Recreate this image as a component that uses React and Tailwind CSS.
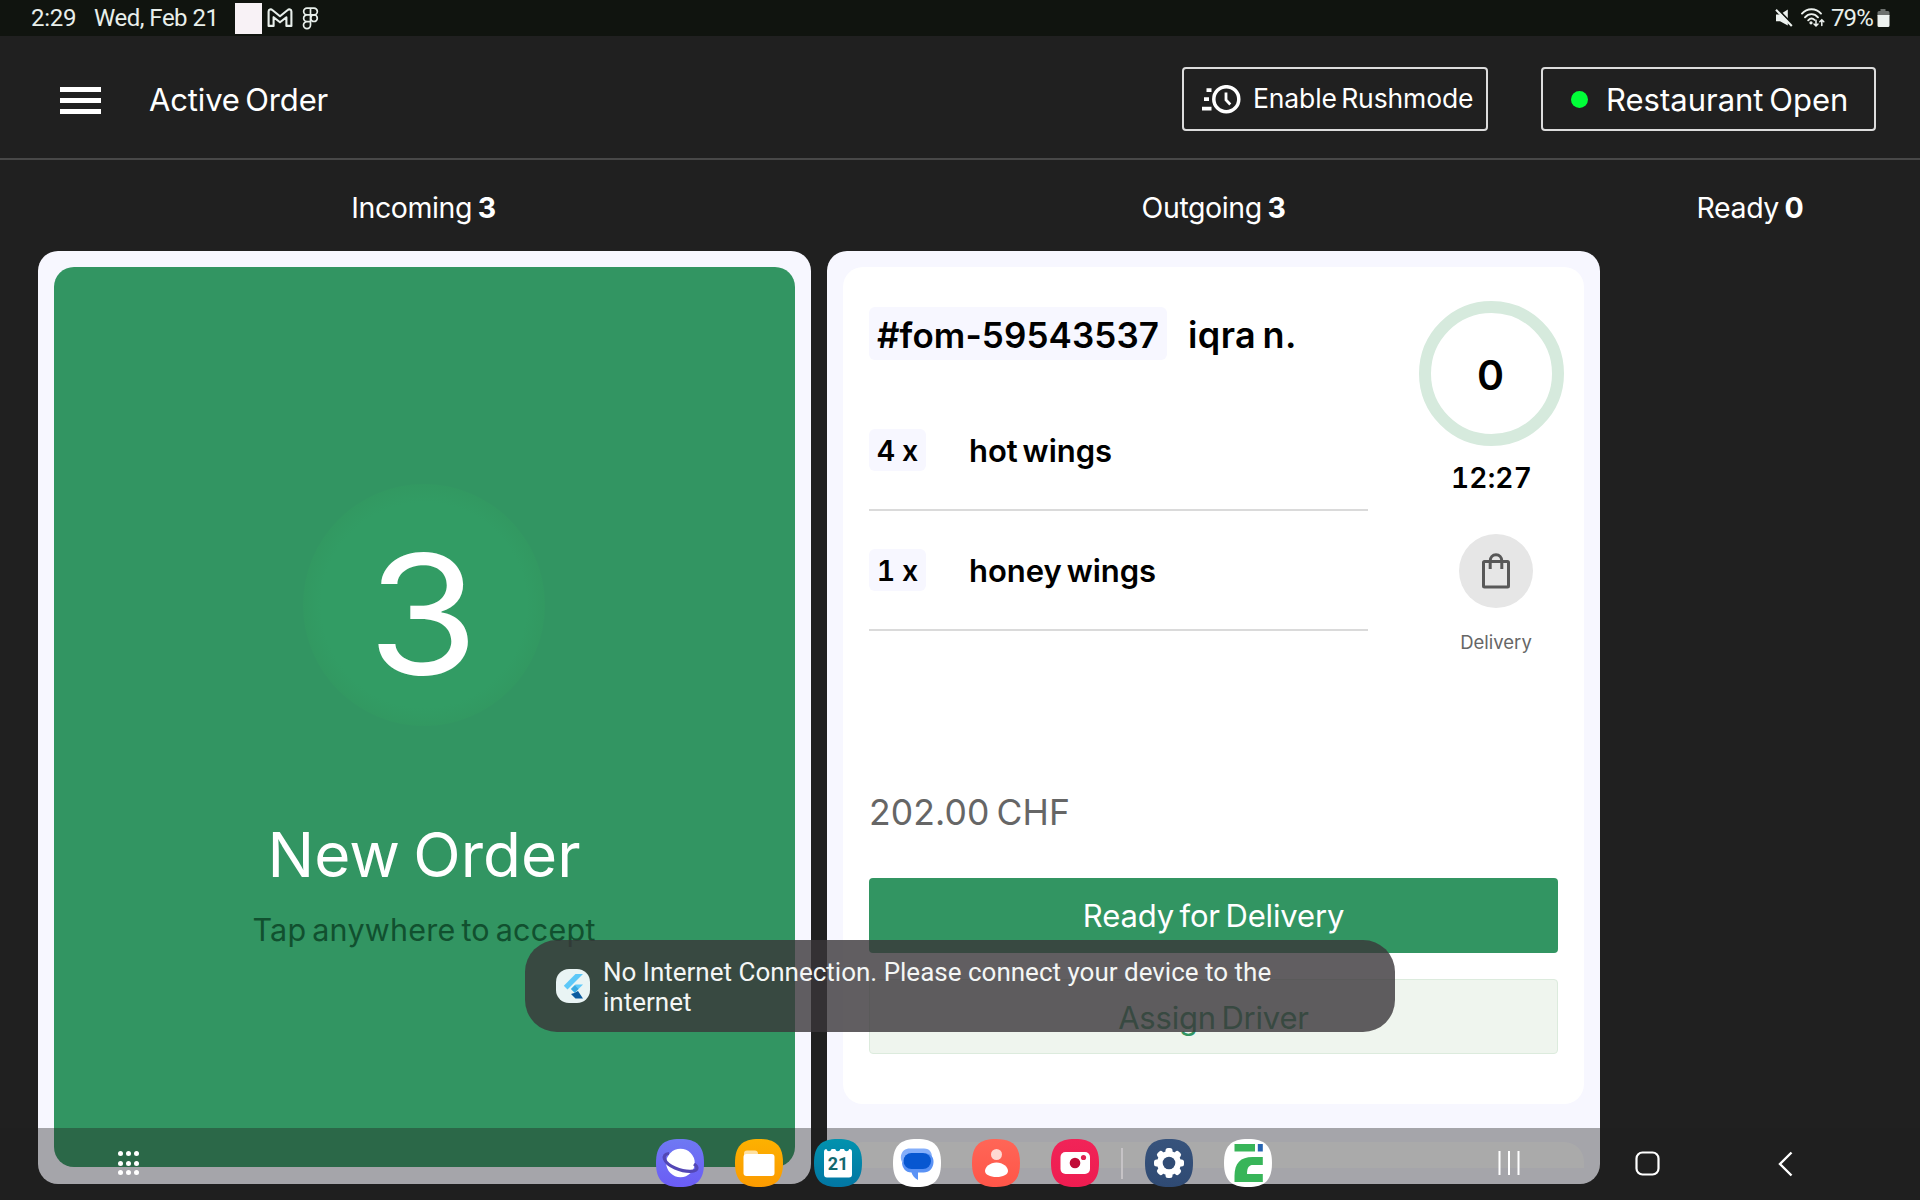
import React from "react";

function GmailIcon() {
  return (
    <svg className="h-[20px] w-[26px]" viewBox="0 0 26 20" fill="none" stroke="#e8efeb" strokeWidth="2.1" strokeLinejoin="round">
      <path d="M1.6 17.9V3.6C1.6 1.4 4 .9 5.3 2L13 8.2 20.7 2c1.300-1.100 3.700-.6 3.700 1.600v14.300h-5V9.200L13 14.300 6.600 9.200v8.700z" />
    </svg>
  );
}

function FigmaIcon() {
  return (
    <svg className="h-[23px] w-[17px]" viewBox="0 0 17 23" fill="none" stroke="#e8efeb" strokeWidth="1.700">
      <path d="M8.500 1.200H5a3.300 3.300 0 0 0 0 6.700h3.500zM8.500 1.200H12a3.300 3.300 0 0 1 0 6.700H8.500zM8.500 7.900H5a3.300 3.300 0 0 0 0 6.700h3.500zM8.500 14.600H5a3.500 3.500 0 1 0 3.500 3.500z" />
      <circle cx="12" cy="11.200" r="3.300" />
    </svg>
  );
}

function MuteIcon() {
  return (
    <svg className="h-[18px] w-[18px]" viewBox="0 0 18 18">
      <path d="M1 5.500h4L12.800.5v16L5 12.200H1z" fill="#edf2ef" />
      <path d="M2.200-.4L18.500 16.400" stroke="#10140f" strokeWidth="2" />
      <path d="M1 .8L16.800 17" stroke="#edf2ef" strokeWidth="2.100" />
    </svg>
  );
}

function WifiIcon() {
  return (
    <svg className="h-[20px] w-[24px]" viewBox="0 0 24 20" fill="none" stroke="#edf2ef" strokeWidth="1.900" strokeLinecap="round">
      <path d="M1 5.600C6-.2 15-.2 20 5.600M4 9.300c3.700-4.200 9.300-4.200 13 0M7.200 12.300c2-2 4.500-2.100 6.300-.4" />
      <circle cx="10" cy="14.800" r=".7" fill="#edf2ef" />
      <path d="M15 12.200v5.800m-2-2l2 2 2-2M20.800 17.500v-5.800m-2 2l2-2 2 2" strokeWidth="1.500" />
    </svg>
  );
}

function BatteryIcon() {
  return (
    <svg className="h-[19px] w-[13px]" viewBox="0 0 13 19">
      <path d="M3.500 0h5v2H11a1.500 1.500 0 0 1 1.500 1.500V7H.5V3.500A1.500 1.500 0 0 1 2 2h1.500z" fill="#6d716e" />
      <path d="M.5 6h12v10.500A1.500 1.500 0 0 1 11 18H2a1.500 1.500 0 0 1-1.500-1.500z" fill="#edf2ef" />
    </svg>
  );
}

function StatusBar() {
  return (
    <div className="flex h-[36px] shrink-0 items-center bg-[#10140f] pl-[31px] pr-[30px] font-[Roboto] text-[24px] leading-[36px] text-[#e8efeb]">
      <span className="w-[63px] tracking-[-0.3px]">2:29</span>
      <span className="w-[141px] whitespace-nowrap tracking-[-0.5px]">Wed, Feb 21</span>
      <span className="h-[31px] w-[27px] bg-[#f8f2f6]" />
      <span className="ml-[5px]"><GmailIcon /></span>
      <span className="ml-[9px]"><FigmaIcon /></span>
      <span className="ml-auto"><MuteIcon /></span>
      <span className="ml-[8px]"><WifiIcon /></span>
      <span className="ml-[6px] w-[46px] tracking-[-0.900px]">79%</span>
      <BatteryIcon />
    </div>
  );
}

function RushIcon() {
  return (
    <svg className="h-[29px] w-[40px]" viewBox="0 0 40 29" fill="none" stroke="#fff">
      <circle cx="25.300" cy="14.200" r="12.500" strokeWidth="3.500" />
      <path d="M25 7.500v7.500l4.300 4.500" strokeWidth="2.800" />
      <path d="M5.500 5.200h5M3 14.200h5M1 23.700h9.500" strokeWidth="3.700" />
    </svg>
  );
}

function Header() {
  return (
    <div className="flex h-[124px] shrink-0 items-center border-b-2 border-[#484848] pl-[60px] pr-[44px] pt-[4px] text-white">
      <div className="mt-[2px] flex h-[27px] w-[41px] flex-col justify-between">
        <span className="h-[5px] bg-white" />
        <span className="h-[5px] bg-white" />
        <span className="h-[5px] bg-white" />
      </div>
      <span className="ml-[48px] pt-[2px] text-[31px] tracking-[-0.150px] [word-spacing:-3px]">Active Order</span>
      <div className="ml-auto flex h-[64px] w-[306px] items-center rounded-[4px] border-2 border-[#dcdcdc] pl-[17px]">
        <RushIcon />
        <span className="ml-[12px] whitespace-nowrap text-[26.5px] tracking-[-0.120px] [word-spacing:-3px]">Enable Rushmode</span>
      </div>
      <div className="ml-[53px] flex h-[64px] w-[335px] items-center rounded-[4px] border-2 border-[#dcdcdc] pl-[28px]">
        <span className="h-[17px] w-[17px] rounded-full bg-[#00ff38]" />
        <span className="ml-[18px] whitespace-nowrap pt-[2px] text-[31px] [word-spacing:-3px]">Restaurant Open</span>
      </div>
    </div>
  );
}

function Tab({ label, count, width }) {
  return (
    <div className={`${width} text-center`}>
      {label} <span className="font-bold">{count}</span>
    </div>
  );
}

function Item({ qty, name }) {
  return (
    <div className="flex h-[120px] w-[499px] items-start border-b-2 border-[#dadada] pt-[38px]">
      <span className="flex h-[42px] w-[57px] items-center justify-center rounded-[6px] bg-[#f7f7ff] pt-[2px] text-[28.5px] tabular-nums [word-spacing:-1px]">{qty}</span>
      <span className="ml-[43px] whitespace-nowrap pt-[1px] text-[31px] leading-[42px] [word-spacing:-3px]">{name}</span>
    </div>
  );
}

function IncomingCard() {
  return (
    <div className="h-[933px] w-[773px] rounded-[20px] bg-[#f7f7ff] p-4 pb-[17px]">
      <div className="flex h-full flex-col items-center rounded-[20px] bg-[#329562] text-white">
        <div className="mt-[217px] flex h-[242px] w-[242px] items-center justify-center rounded-full bg-[radial-gradient(circle,#329c64_60%,#329861_72%)] pt-[19px] text-[165px] leading-none">
          <span className="mr-[2px] scale-x-[1.090]">3</span>
        </div>
        <div className="mt-[93px] whitespace-nowrap text-[62px] leading-[72px] [word-spacing:-4px]">New Order</div>
        <div className="mt-[19px] whitespace-nowrap text-[30.5px] leading-[40px] tracking-[0.25px] text-[#11502f] [word-spacing:-3px]">Tap anywhere to accept</div>
      </div>
    </div>
  );
}

function OutgoingCard() {
  return (
    <div className="h-[933px] w-[773px] overflow-hidden rounded-[20px] bg-[#f7f7ff] p-4">
      <div className="flex h-[837px] flex-col rounded-[20px] bg-white px-[26px] text-black">
        <div className="flex h-[516px] justify-between font-semibold">
          <div>
            <div className="mt-[40px] flex h-[53px] items-center text-[35px] leading-[50px] whitespace-nowrap">
              <span className="flex h-[53px] w-[298px] items-center justify-center rounded-[6px] bg-[#f7f7ff] pt-[3px] tracking-[0.1px]">#fom-59543537</span>
              <span className="ml-[21px] pt-[3px] text-[36px] tracking-[0.4px] [word-spacing:-3px]">iqra n.</span>
            </div>
            <div className="mt-[31px]">
              <Item qty="4 x" name="hot wings" />
              <Item qty="1 x" name="honey wings" />
            </div>
          </div>
          <div className="mr-[-6px] flex w-[145px] flex-col items-center">
            <div className="mt-[34px] flex h-[145px] w-[145px] items-center justify-center rounded-full border-[12px] border-[#d6eadd] pt-[4px] pr-[2px] text-[41px]">0</div>
            <div className="mt-[12px] text-[28px] leading-[40px] tracking-[0.2px] tabular-nums">12:27</div>
            <div className="mt-[36px] ml-[9px] flex h-[74px] w-[74px] items-center justify-center rounded-full bg-[#e6e6e6]">
              <svg className="h-[36px] w-[28px]" viewBox="0 0 28 36" fill="none" stroke="#585858" strokeWidth="3">
                <rect x="1.500" y="8.500" width="25" height="25.500" rx="1" />
                <path d="M8.200 16V8c0-3.800 2.500-6.200 5.800-6.200s5.800 2.400 5.800 6.200v8" />
              </svg>
            </div>
            <div className="mt-[21px] ml-[9px] text-[18.5px] leading-[26px] font-normal text-[#666]">Delivery</div>
          </div>
        </div>
        <div className="mt-[10px] text-[35.5px] leading-[40px] tracking-[0.1px] text-[#666] [word-spacing:-3px]">202.00 CHF</div>
        <div className="mt-[45px] flex h-[75px] items-center justify-center rounded-[4px] bg-[#329562] pt-[2px] text-[31px] tracking-[-0.150px] text-white [word-spacing:-3px]">Ready for Delivery</div>
        <div className="mt-[26px] flex h-[75px] items-center justify-center rounded-[4px] border border-[#dcebdd] bg-[#eff5ee] pt-[3px] text-[31px] tracking-[-0.200px] text-[#329562] [word-spacing:-3px]">Assign Driver</div>
      </div>
      <div className="mt-[38px] h-[26px] rounded-t-[20px] bg-white" />
    </div>
  );
}

function Toast() {
  return (
    <div className="absolute left-[525px] top-[940px] flex h-[92px] w-[870px] items-center rounded-[32px] bg-[rgba(58,54,57,0.800)] pl-[31px] font-[Roboto] text-[26px] leading-[30px] text-[#f4f6f5]">
      <svg className="h-[34px] w-[34px]" viewBox="0 0 34 34">
        <rect width="34" height="34" rx="13" fill="#e9f4f4" />
        <path d="M19.500 5H27L11.500 20.500 7.800 16.800z" fill="#5cc8f8" />
        <path d="M19.500 15.500H27l-8.200 8.200-3.800-3.800z" fill="#5cc8f8" />
        <path d="M15 20l3.800-3.800 3.700 3.700-3.700 3.800z" fill="#39a9e0" />
        <path d="M18.800 23.700l3.200-1.700 5 7.500h-7.500l-4.500-4.500z" fill="#0b5b9f" />
      </svg>
      <span className="ml-[13px] pt-[1px]">
        No Internet Connection. Please connect your device to the
        <br />
        internet
      </span>
    </div>
  );
}

const tile = "M24 0C41 0 48 7 48 24S41 48 24 48 0 41 0 24 7 0 24 0z";

function AppIcon({ fill, to, id, className, children }) {
  return (
    <svg className={`h-12 w-12 shrink-0 ${className || ""}`} viewBox="0 0 48 48">
      <defs>
        <linearGradient id={id} x1="0" y1="0" x2="0" y2="1">
          <stop offset="0" stopColor={fill} />
          <stop offset="1" stopColor={to || fill} />
        </linearGradient>
      </defs>
      <path d={tile} fill={`url(#${id})`} />
      {children}
    </svg>
  );
}

const teeth = [0, 45, 90, 135, 180, 225, 270, 315];

function Dock() {
  return (
    <div className="absolute inset-x-0 bottom-0 flex h-[72px] items-start bg-[rgba(32,32,32,0.380)] pt-[11px]">
      <div className="ml-[116px] mt-[12px] grid h-[24px] w-[24px] grid-cols-3 content-between justify-between justify-items-center">
        {[0, 1, 2, 3, 4, 5, 6, 7, 8].map((n) => (
          <span key={n} className="h-[5px] w-[5px] rounded-full bg-white" />
        ))}
      </div>
      <AppIcon id="browser" fill="#6f79f3" to="#6b5cf5" className="ml-[516px]">
        <circle cx="24.500" cy="24" r="14.300" fill="#fff" />
        <path d="M13 14.500C5 15 7 24 19 29c12 5 22 4 22 0 0-1.800-1.500-3-3-4" fill="none" stroke="#5347b5" strokeWidth="3.200" />
      </AppIcon>
      <AppIcon id="files" fill="#fdb100" to="#fb9a00" className="ml-[31px]">
        <path d="M9 14.500c0-2 1-3 3-3h8c1.500 0 3 1 3 3v5H9z" fill="#ffe0a0" />
        <rect x="8.500" y="15" width="31" height="22" rx="3" fill="#fff" />
      </AppIcon>
      <AppIcon id="calendar" fill="#0292ae" to="#0276a3" className="ml-[31px]">
        <path d="M10 13c0-2 1-3 2.500-3 .5 3 4.500 3 5 0h3.800c.5 3 4.500 3 5 0h3.800c.5 3 4.500 3 5 0 1.900 0 2.900 1 2.900 3v22.500c0 2-1 3-3 3H13c-2 0-3-1-3-3z" fill="#fff" />
        <text x="24" y="31" textAnchor="middle" fontFamily="Roboto" fontWeight="700" fontSize="18" fill="#13696f">21</text>
      </AppIcon>
      <AppIcon id="messages" fill="#ffffff" className="ml-[31px]">
        <path d="M17 9.500h14c6 0 9 5 7.500 10L36 29H18C10 28 7 21 8 16.500c1-4.500 4-7 9-7z" fill="#84aefa" />
        <path d="M33 14.500c5 0 8 4 7.500 9-.5 6-4 10-10 10h-5.500v7.500c-3.500-2-5.500-4.500-6.500-7.500-6 0-9.500-5-9.500-10z" fill="#5a92f5" />
        <rect x="10.500" y="14" width="27.500" height="16" rx="8" fill="#0757d1" />
      </AppIcon>
      <AppIcon id="contacts" fill="#ff6657" to="#ff5548" className="ml-[31px]">
        <circle cx="24.500" cy="15.500" r="5.500" fill="#ffd9d2" />
        <path d="M24.500 23.500c6.500 0 11.500 4.500 11.500 8.500 0 3.500-5 6-11.500 6S13 35.500 13 32c0-4 5-8.500 11.500-8.500z" fill="#fff" />
      </AppIcon>
      <AppIcon id="camera" fill="#f12458" to="#ee1c50" className="ml-[31px]">
        <rect x="9.500" y="13" width="29.500" height="22" rx="5" fill="#fff" />
        <circle cx="24" cy="24" r="5.300" fill="#c00b37" />
        <circle cx="32.500" cy="18.500" r="2.600" fill="#e0204f" />
      </AppIcon>
      <span className="ml-[22px] mt-[9px] h-[31px] w-[2px] bg-[#c6c3c6]" />
      <AppIcon id="settings" fill="#37537c" to="#2f4a73" className="ml-[22px]">
        <g fill="#fff">
          {teeth.map((a) => (
            <rect key={a} x="20.500" y="9" width="7" height="8" rx="2.500" transform={`rotate(${a} 24 24)`} />
          ))}
          <circle cx="24" cy="24" r="12" />
        </g>
        <circle cx="24" cy="24" r="6.300" fill="#304b74" />
      </AppIcon>
      <AppIcon id="foodapp" fill="#ffffff" className="ml-[31px]">
        <path d="M10.500 5H31v7.500H10.500z" fill="#38b559" />
        <path d="M33.800 5h5v7.500h-5z" fill="#2765b2" />
        <path d="M38.800 18v8H29c-4 0-6 2.500-6 9h15.800v8H10.500v-6c0-13 6-19 18-19z" fill="#38b559" />
      </AppIcon>
      <svg className="ml-[226px] mt-[12px] h-[24px] w-[22px]" viewBox="0 0 22 24" stroke="#fff" strokeWidth="2">
        <path d="M1.500 0v24M11 0v24M20.500 0v24" />
      </svg>
      <svg className="ml-[115px] mt-[12px] h-[25px] w-[25px]" viewBox="0 0 25 25" fill="none" stroke="#fff" strokeWidth="2.200">
        <rect x="1.500" y="1.500" width="22" height="22" rx="6" />
      </svg>
      <svg className="ml-[118px] mt-[12px] h-[26px] w-[15px]" viewBox="0 0 15 26" fill="none" stroke="#fff" strokeWidth="2.400">
        <path d="M13.500 1.500L2 13l11.500 11.500" />
      </svg>
    </div>
  );
}

export default function App() {
  return (
    <div className="relative flex h-[1200px] w-[1920px] flex-col overflow-hidden bg-[#202020] font-[Inter,sans-serif]">
      <StatusBar />
      <Header />
      <div className="flex h-[91px] shrink-0 items-center gap-[17px] pl-[37px] pt-[5px] text-[28.5px] tracking-[-0.400px] text-white [word-spacing:-2px]">
        <Tab label="Incoming" count="3" width="w-[773px]" />
        <Tab label="Outgoing" count="3" width="w-[773px]" />
        <Tab label="Ready" count="0" width="w-[266px]" />
      </div>
      <div className="flex gap-[16.5px] pl-[37.5px]">
        <IncomingCard />
        <OutgoingCard />
      </div>
      <Toast />
      <Dock />
    </div>
  );
}
